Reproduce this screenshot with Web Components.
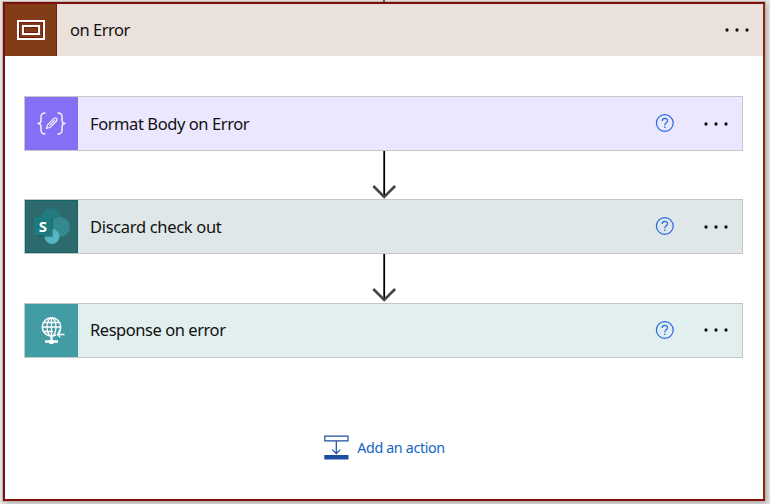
<!DOCTYPE html>
<html lang="en"><head><meta charset="utf-8"><title>on Error</title>
<style>html,body{margin:0;height:100%;overflow:hidden}body{background:#e5e5e4;font-family:"Noto Sans","Open Sans",sans-serif;color:#111}</style></head>
<body>
<flow-scope label="on Error">
<flow-card label="Format Body on Error" style="--tile:#8470f5;--fill:#ebe7ff;--ls:-.42px">
<svg slot="icon" width="53" height="53" viewBox="0 0 53 53" fill="none" stroke="#f3efff" stroke-width="1.5" stroke-linecap="round" stroke-linejoin="round"><path d="M20 16c-3 0-4 1-4 4v3c0 2-1 3.500-3 3.500 2 0 3 1.500 3 3.500v3c0 3 1 4 4 4M33 16c3 0 4 1 4 4v3c0 2 1 3.500 3 3.500-2 0-3 1.500-3 3.500v3c0 3-1 4-4 4"/><path stroke-width="1.200" d="M21.500 31.500l1.200-3.900 6.300-6.200c1.700-1.400 4 .8 2.600 2.600l-6.300 6.300zM24.700 28.300l4.800-4.800"/></svg>
</flow-card><flow-arrow></flow-arrow>
<flow-card label="Discard check out" style="--tile:#2c6a6d;--fill:#dfe7e8;--ls:-.32px">
<svg slot="icon" width="53" height="53" viewBox="0 0 53 53"><rect x=".5" y=".5" width="52" height="52" fill="none" stroke="#116468"/><circle cx="26" cy="18.500" r="10.200" fill="#237a7e"/><circle cx="35" cy="27" r="10" fill="#33898e"/><circle cx="27" cy="36.500" r="7.500" fill="#55b5c2"/><path d="M11 18h17v19H11z" fill="#175155" opacity=".5"/><rect x="9" y="17" width="17.500" height="18.500" rx="1.500" fill="#1d7b80"/><text x="17.800" y="31.700" text-anchor="middle" font-family="Noto Sans,sans-serif" font-size="15" font-weight="700" fill="#fff">S</text></svg>
</flow-card><flow-arrow></flow-arrow>
<flow-card label="Response on error" style="--tile:#429ca3;--fill:#e1efef;--ls:-.45px">
<svg slot="icon" width="53" height="53" viewBox="0 0 53 53" fill="none" stroke="#fff" stroke-width="1.300"><circle cx="26.500" cy="23" r="9.200" stroke-width="1.600"/><ellipse cx="26.500" cy="23" rx="4.500" ry="9"/><path d="M26.500 14v18M17.500 23h18M19 18.500h15M19 27.500h9"/><path d="M31 28.500h9v4.500h-9z" fill="#429ca3" stroke="none"/><path d="M39.500 30.500h-7m2.700-2.700l-2.700 2.700 2.700 2.700" stroke-width="1.400"/><path d="M20 37.500h13M26.500 32v5" stroke-width="2.300"/><path d="M24.500 38h4" stroke-width="4"/></svg>
</flow-card>
<add-action slot="footer" label="Add an action"></add-action>
</flow-scope>
<script>
class Base extends HTMLElement{
 render(html){this.attachShadow({mode:'open'}).innerHTML=html}
}
class MoreDots extends Base{
 connectedCallback(){this.render(`<style>:host{display:block;width:25px;height:4px}svg{display:block}</style>
 <svg width="25" height="4" fill="#111"><circle cx="2" cy="2" r="1.650"/><circle cx="12" cy="2" r="1.650"/><circle cx="22" cy="2" r="1.650"/></svg>`)}
}
class FlowScope extends Base{
 connectedCallback(){this.render(`<style>
 :host{display:block;box-sizing:border-box;width:762px;height:499px;margin:2px 0 0 3px;background:#fff;border:2px solid #7c100f;border-right-color:#862b05;box-shadow:0 0 0 1px #bcb4ad,2px 2px 5px #aaa;position:relative}
 .stub{position:absolute;left:378px;top:-4px;width:2px;height:2px;background:#8c4038}
 header{display:flex;align-items:center;box-sizing:border-box;height:52px;background:#eae1dc}
 .tile{display:flex;align-items:center;justify-content:center;box-sizing:border-box;width:52px;height:52px;background:#823d18;border-right:1px solid #7c150c}
 .label{flex:1;padding-left:13px;font-size:16.5px;letter-spacing:-.5px;line-height:24px}
 more-dots{margin-right:13px}
 main{display:flex;flex-direction:column;padding:40px 0 0 19px;width:719px}
 footer{display:flex;justify-content:center;padding-top:76px;width:759px}
 </style><div class="stub"></div><header><div class="tile"><svg width="28" height="20" viewBox="0 0 28 20" fill="none"><path d="M1 1h26v18H1z" stroke="#fff" stroke-width="2"/><path d="M2.500 2.500h23v15h-23z" stroke="#7b160c"/><path d="M6 6h16v8H6z" stroke="#fff" stroke-width="2"/><path d="M7.500 7.500h13v5h-13z" stroke="#7b160c"/></svg></div><div class="label">${this.getAttribute('label')}</div><more-dots></more-dots></header>
 <main><slot></slot></main><footer><slot name="footer"></slot></footer>`)}
}
class FlowCard extends Base{
 connectedCallback(){this.render(`<style>
 :host{display:flex;align-items:center;box-sizing:border-box;width:719px;height:55px;border:1px solid #c5c6c7;background:var(--fill)}
 .tile{width:53px;height:53px;background:var(--tile)}
 .label{flex:1;padding-left:12px;font-size:16.5px;line-height:24px;letter-spacing:var(--ls);white-space:nowrap}
 .help{display:block;margin-right:30px}more-dots{margin-right:13px}
 </style><div class="tile"><slot name="icon"></slot></div><div class="label">${this.getAttribute('label')}</div>
 <svg class="help" width="19" height="19" viewBox="0 0 19 19" fill="none" stroke="#2469e8" stroke-width="1.200"><circle cx="9.800" cy="9" r="8.400"/><path d="M7.200 7c0-3.500 5.300-3.400 5.300-.3 0 2-2.700 2.200-2.700 4.700"/><path d="M9.800 12.700v1.400" stroke-width="1.400"/></svg><more-dots></more-dots>`)}
}
class FlowArrow extends Base{
 connectedCallback(){this.render(`<style>:host{display:flex;height:48.300px;justify-content:center}svg{display:block}</style>
 <svg width="26" height="48" viewBox="0 0 26 48" fill="none"><path d="M13.200 0v46" stroke="#000" stroke-width="1.800"/><path d="M2.300 35l10.900 11L24.100 35" stroke="#444" stroke-width="2.600"/></svg>`)}
}
class AddAction extends Base{
 connectedCallback(){this.render(`<style>:host{display:flex;align-items:center;gap:8px;color:#1564c0;font-size:14.300px;line-height:26px;white-space:nowrap;letter-spacing:-.35px}svg{display:block}span{padding-top:1px}</style>
 <svg width="25" height="25" viewBox="0 0 25 25" fill="none" stroke="#1c4da1"><path d="M.8 1.200h23.200v4.600H.8z" stroke-width="1.200"/><path d="M12.300 6v12.500M8.300 14.700l4 4 4-4" stroke-width="1.200"/><path d="M.3 20h24.200v4.500H.3z" fill="#1c4da1" stroke="none"/></svg><span>${this.getAttribute('label')}</span>`)}
}
customElements.define('more-dots',MoreDots);
customElements.define('flow-card',FlowCard);
customElements.define('flow-arrow',FlowArrow);
customElements.define('add-action',AddAction);
customElements.define('flow-scope',FlowScope);
</script></body></html>
